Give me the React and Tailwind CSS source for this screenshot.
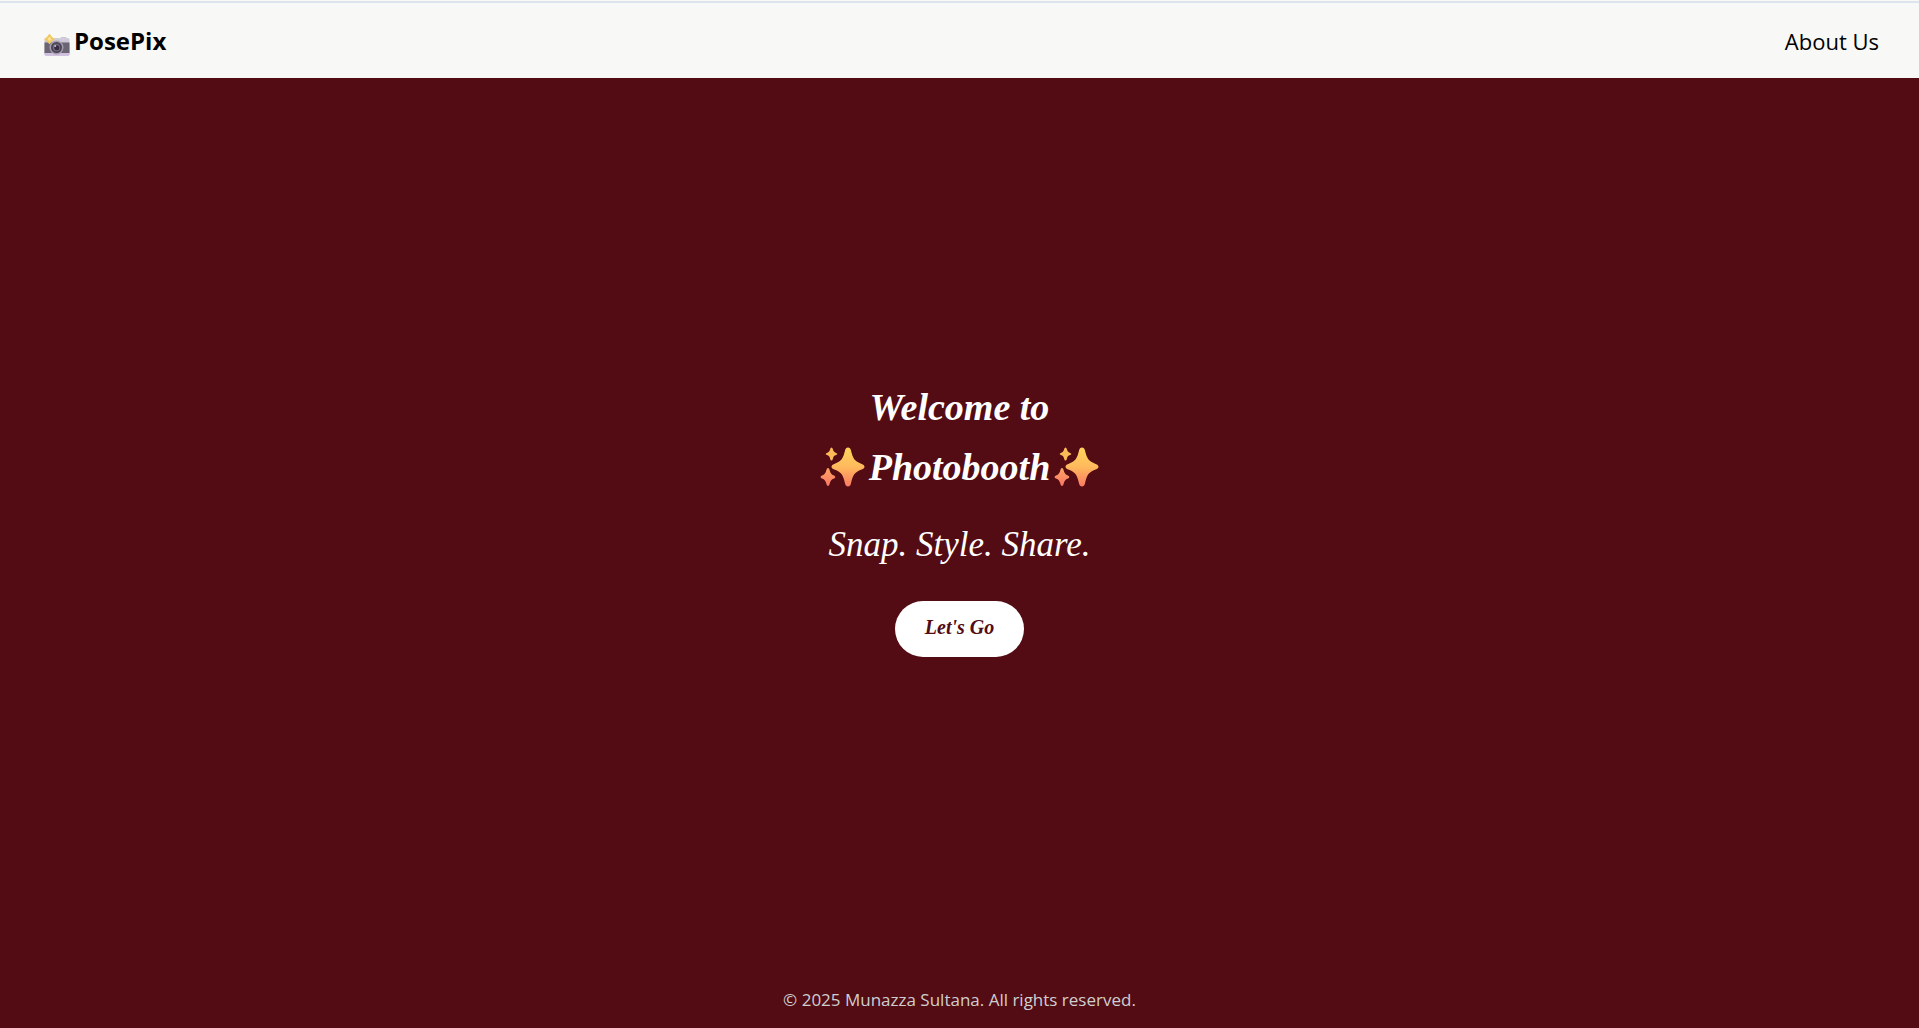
function CameraIcon() {
  return (
    <svg viewBox="0 0 26 22" className="mt-2 h-[22px] w-[26px]" aria-hidden="true">
      <defs>
        <linearGradient id="cam-top" x1="0" y1="0" x2="0" y2="1">
          <stop offset="0" stopColor="#d3cedb" />
          <stop offset="1" stopColor="#b3acbd" />
        </linearGradient>
      </defs>
      <path d="M16.5 5V4q0-1 1-1h4q1 0 1 1v1z" fill="#c9c4d0" />
      <rect x="0.5" y="4" width="25" height="17.5" rx="1.5" fill="url(#cam-top)" />
      <rect x="0.5" y="8.5" width="25" height="10.5" fill="#6b6573" />
      <path d="M0.5 19h25v1q0 1.7-1.7 1.7H2.2Q.5 21.700.5 20z" fill="#d0bfe0" />
      <circle cx="12.500" cy="13.500" r="7" fill="#a49eac" />
      <circle cx="12.500" cy="13.500" r="5.500" fill="#4b4356" />
      <circle cx="12.500" cy="13.500" r="3.800" fill="#72687f" />
      <circle cx="12.800" cy="13.800" r="2.500" fill="#352d42" />
      <circle cx="11.200" cy="12" r="1" fill="#c5bdd0" />
      <path d="M5.500 0.500 Q7 3.500 10 5 Q7 6.500 5.500 9.500 Q4 6.500 1 5 Q4 3.500 5.500 0.500z" fill="#f2c85c" stroke="#f2c85c" strokeWidth="1.200" strokeLinejoin="round" />
      <path d="M5.500 2.500 L7.500 5 L5.500 7.500 L3.500 5z" fill="#fbe39a" />
    </svg>
  );
}

function Sparkles() {
  return (
    <svg viewBox="0 0 45 40" className="h-10 w-[45px] shrink-0" aria-hidden="true">
      <defs>
        <linearGradient id="sparkle" x1="0" y1="0" x2="0" y2="1">
          <stop offset="0" stopColor="#ffd45c" />
          <stop offset="0.5" stopColor="#ffb95c" />
          <stop offset="1" stopColor="#fb7a64" />
        </linearGradient>
        <linearGradient id="sparkle-low" x1="0" y1="0" x2="0" y2="1">
          <stop offset="0" stopColor="#fda65f" />
          <stop offset="1" stopColor="#fa7568" />
        </linearGradient>
      </defs>
      <path d="M28 0.500c1.600 0 2.400 1 2.900 2.800 2.300 8.700 3.200 10.600 10.800 13.600 1.900.8 2.800 1.500 2.800 2.800s-.9 2-2.800 2.800c-7.600 3-8.500 5-10.800 14.200-.5 1.800-1.300 2.800-2.900 2.800s-2.400-1-2.900-2.800c-2.300-9.200-3.200-11.200-10.800-14.200-1.900-.8-2.800-1.500-2.800-2.800s.9-2 2.800-2.800c7.600-3 8.500-4.900 10.800-13.600C25.600 1.500 26.400.5 28 .5z" fill="url(#sparkle)" />
      <path d="M11.500 0.500q1 0 1.300 1.500c.7 2.500 1.200 3.200 3.300 3.900q1.200.4 1.200 1.100t-1.200 1.100c-2.100.7-2.600 1.400-3.300 3.900q-.3 1.500-1.300 1.500t-1.300-1.500c-.7-2.500-1.200-3.200-3.300-3.900Q5.700 7.700 5.700 7t1.200-1.100C9 5.200 9.500 4.500 10.200 2q.3-1.500 1.300-1.500z" fill="#fcba58" />
      <path d="M8 21q1.200 0 1.500 1.700c.9 3.500 1.800 4.800 4.500 5.800q1.300.5 1.300 1.500T14 31.500c-2.700 1-3.600 2.300-4.500 5.800Q9.200 39 8 39t-1.500-1.700C5.600 33.800 4.700 32.500 2 31.500.7 31 .7 30.500.7 30S.7 29 2 28.500c2.700-1 3.600-2.300 4.500-5.800Q6.800 21 8 21z" fill="url(#sparkle-low)" />
    </svg>
  );
}

export default function App() {
  return (
    <div className="flex min-h-screen flex-col border-t border-[#f8f9f7] bg-[#530b14] font-['Segoe_UI','Open_Sans',sans-serif] text-white">
      <header className="flex items-center justify-between border-t-2 border-[#dce5ee] bg-[#f8f9f7] pr-10 pl-11 text-black">
        <a href="#home" className="flex items-center gap-1 py-5 text-2xl leading-[35px] font-bold">
          <CameraIcon />
          PosePix
        </a>
        <nav>
          <a href="#about" className="text-[22px] leading-8">About Us</a>
        </nav>
      </header>

      <main className="flex flex-1 flex-col items-center justify-center pb-4 font-['Liberation_Serif',cursive] italic">
        <h1 className="flex flex-col items-center text-[38px] leading-[60px] font-bold">
          <span>Welcome to</span>
          <span className="flex items-center gap-1">
            <Sparkles />
            Photobooth
            <Sparkles />
          </span>
        </h1>
        <p className="mt-7 text-[35px] leading-10">Snap. Style. Share.</p>
        <button type="button" className="mt-9 rounded-full bg-white px-[30px] pt-3 pb-4 text-xl leading-7 font-bold text-[#530b14] italic">
          Let's Go
        </button>
      </main>

      <footer className="p-4 text-center text-[17px] leading-6 text-[#cfcfcf]">
        © 2025 Munazza Sultana. All rights reserved.
      </footer>
    </div>
  );
}
